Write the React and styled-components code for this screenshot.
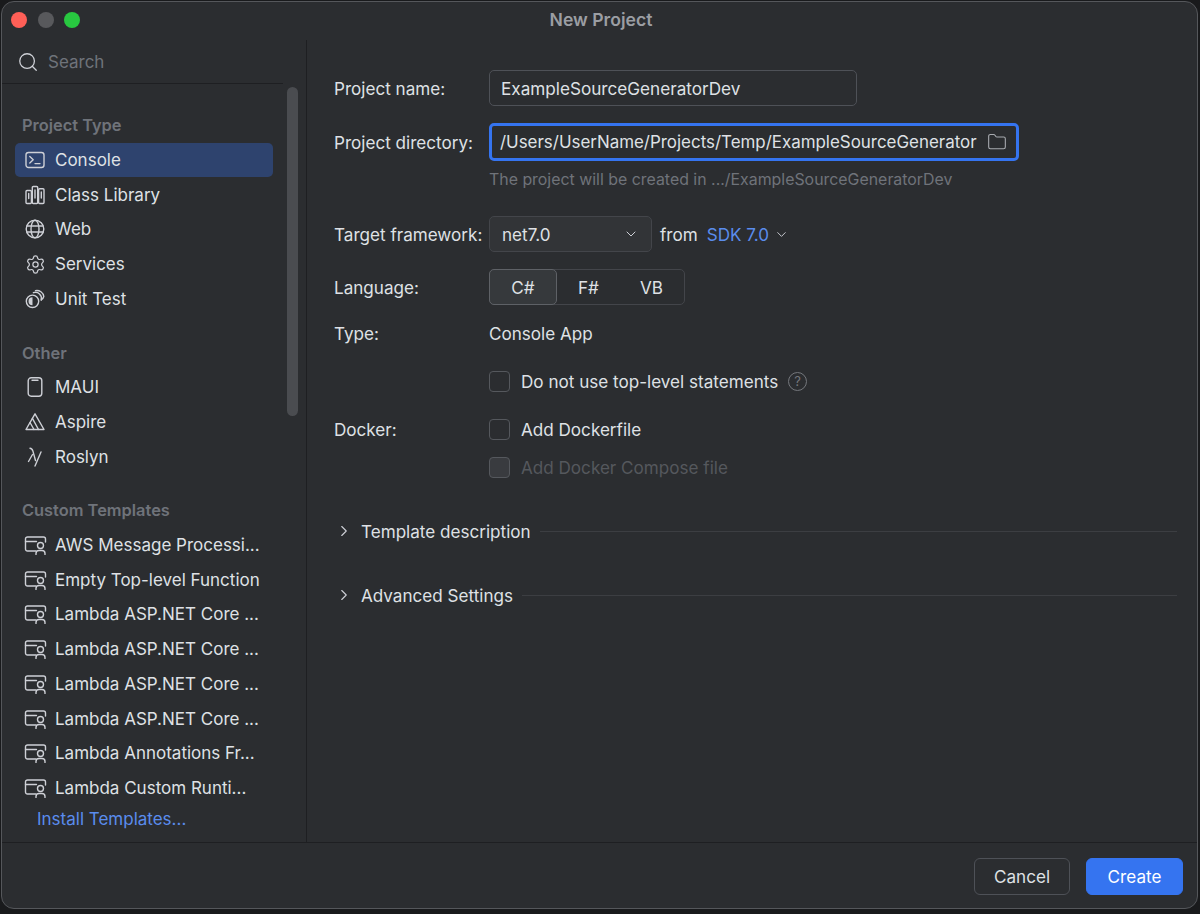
import React from 'react';
import styled, { createGlobalStyle } from 'styled-components';
import { Search, Settings, ChevronDown, ChevronRight, Folder } from 'lucide-react';

const GlobalStyle = createGlobalStyle`
  html, body { margin: 0; padding: 0; background: #191a1c; }
  * { box-sizing: border-box; }
  body { font-family: Inter, "Liberation Sans", sans-serif; }
`;

const Page = styled.div` width: 1200px; height: 914px; padding: 1px 2px 5px 1px; background: #191a1c; `;
const Window = styled.div`
  height: 100%; display: flex; flex-direction: column; background: #2b2d30; color: #dfe1e5;
  border: 1px solid #55575b; border-radius: 13px; overflow: hidden; font-size: 17.1px;
`;
const TitleBar = styled.div`
  height: 38px; flex: none; padding-bottom: 2px; display: grid; grid-template-columns: 1fr auto 1fr; align-items: center;
`;
const Lights = styled.div` display: flex; gap: 10.5px; padding-left: 9px; `;
const Light = styled.span` width: 16px; height: 16px; border-radius: 50%; background: ${p => p.$color}; `;
const Title = styled.div` font-size: 17.6px; font-weight: 600; color: #9b9ea3; padding: 0 0 2px 3px; `;

const Body = styled.div` flex: 1; min-height: 0; display: flex; border-bottom: 1px solid #1e1f22; `;
const Sidebar = styled.aside` width: 305px; flex: none; position: relative; border-right: 1px solid #1e1f22; font-size: 17px; `;
const SearchRow = styled.div`
  height: 44px; margin-right: 23px; display: flex; align-items: center; gap: 9px; padding-left: 15px;
  border-bottom: 1px solid #1e1f22; color: #6f737a; svg { color: #ced0d6; }
`;
const Scrollbar = styled.div`
  position: absolute; left: 285px; top: 47px; width: 11px; height: 329px; border-radius: 6px; background: #4a4c50;
`;
const List = styled.div` padding: 24px 0 0 13px; width: 258px; box-sizing: content-box; `;
const SectionTitle = styled.div`
  height: 34.5px; display: flex; align-items: center; padding-left: 7px; margin-top: ${p => p.$gap || 0}px;
  font-size: 16.4px; font-weight: 600; color: #6f737a;
`;
const Item = styled.div`
  width: 258px; height: 34.75px; display: flex; align-items: center; border-radius: 5px; color: #dfe1e5;
  background: ${p => (p.$active ? '#2e436e' : 'transparent')};
`;
const ItemIcon = styled.span` width: 40px; flex: none; display: flex; justify-content: center; color: #ced0d6; `;
const ItemLabel = styled.span` white-space: nowrap; `;
const InstallLink = styled.div` height: 26.5px; display: flex; align-items: center; padding-left: 22px; color: #5a8ced; `;

const Main = styled.main` flex: 1; min-width: 0; padding: 30px 23px 0 27px; `;
const Row = styled.div`
  display: flex; align-items: center; height: ${p => p.$h || 24}px; margin-top: ${p => p.$top || 0}px;
`;
const Label = styled.div` width: 155px; flex: none; white-space: nowrap; `;
const TextInput = styled.div`
  width: ${p => p.$w}px; height: ${p => (p.$focus ? 38 : 36)}px; display: flex; align-items: center;
  justify-content: space-between; padding: 0 ${p => (p.$focus ? 9 : 10)}px 0 ${p => (p.$focus ? 8 : 11)}px; border-radius: 5px; white-space: nowrap;
  font-size: ${p => (p.$focus ? 16.93 : 17.15)}px;
  border: ${p => (p.$focus ? '3px solid #3574f0' : '1px solid #4e5157')};
  svg { color: #a8abb0; flex: none; }
`;
const Hint = styled.div` padding-left: 155px; font-size: 15.9px; color: #6f737a; white-space: nowrap; `;
const Select = styled.div`
  width: 163px; height: 36px; display: flex; align-items: center; justify-content: space-between;
  padding: 0 12px 0 12px; background: #323437; border: 1px solid #43454a; border-radius: 5px;
  svg { color: #ced0d6; }
`;
const From = styled.span` margin: 0 9px 0 8px; `;
const SdkLink = styled.span`
  display: flex; align-items: center; gap: 5px; color: #5a8ced; svg { color: #ced0d6; }
`;
const Segments = styled.div` width: 196px; height: 36px; display: flex; border: 1px solid #43454a; border-radius: 5px; `;
const Segment = styled.div`
  width: ${p => p.$w}px; margin: -1px 0 -1px ${p => (p.$active ? -1 : 0)}px; display: flex; align-items: center; justify-content: center;
  border-radius: 5px; background: ${p => (p.$active ? '#36393c' : 'transparent')};
  border: 1px solid ${p => (p.$active ? '#5e6166' : 'transparent')};
`;
const CheckBox = styled.span`
  width: 21px; height: 21px; flex: none; margin-right: 11px; border-radius: 4px; border: 1px solid #55585d;
  background: ${p => (p.$disabled ? '#393b3f' : 'transparent')};
`;
const CheckText = styled.span` white-space: nowrap; color: ${p => (p.$disabled ? '#55585d' : 'inherit')}; `;
const Help = styled.span`
  width: 19px; height: 19px; margin-left: 10px; border-radius: 50%; border: 1px solid #74777c; color: #74777c;
  font-size: 13px; display: flex; align-items: center; justify-content: center;
`;
const Collapsible = styled.div`
  display: flex; align-items: center; height: 24px; margin-top: ${p => p.$top}px; white-space: nowrap;
  svg { color: #ced0d6; margin-right: 8px; margin-left: 1px; flex: none; }
`;
const Rule = styled.span` flex: 1; height: 1px; margin: 0 -3px 0 9px; background: #3c3e42; `;

const Footer = styled.footer` height: 65px; flex: none; display: flex; justify-content: flex-end; align-items: center; gap: 16px; padding: 1px 14px 0 0; `;
const Button = styled.button`
  width: ${p => (p.$primary ? 97 : 96)}px; height: 37px; border-radius: 6px; font: inherit; color: ${p => (p.$primary ? '#ffffff' : '#dfe1e5')};
  background: ${p => (p.$primary ? '#3574f0' : 'transparent')};
  border: 1px solid ${p => (p.$primary ? '#3574f0' : '#4e5157')};
`;

const Icon = ({ w = 20, h = 20, box = '0 0 20 20', children }) => (
  <svg width={w} height={h} viewBox={box} fill="none" stroke="currentColor" strokeWidth="1.4" strokeLinecap="round" strokeLinejoin="round">
    {children}
  </svg>
);
const ConsoleIcon = () => (
  <Icon><rect x="1" y="2.5" width="18" height="15" rx="2.5" /><path d="M4.8 6.6l3.4 3.2-3.4 3.2M10 13.6h5" /></Icon>
);
const LibraryIcon = () => (
  <Icon>
    <rect x="1" y="5.5" width="5.4" height="13" rx="1" /><rect x="7.3" y="1.5" width="5.4" height="17" rx="1" /><rect x="13.6" y="3.8" width="5.4" height="14.7" rx="1" />
    <path d="M3.7 8.5v5M10 5v8M16.3 7v6" />
  </Icon>
);
const GlobeIcon = () => (
  <Icon>
    <circle cx="10" cy="10" r="8.8" /><ellipse cx="10" cy="10" rx="4" ry="8.8" />
    <path d="M2 7h16M2 13h16" />
  </Icon>
);
const UnitTestIcon = () => (
  <Icon>
    <circle cx="7.5" cy="12.3" r="6.2" /><path d="M7.5 8.3a4 4 0 0 0 0 8z" fill="currentColor" stroke="none" />
    <path d="M8.4 3.7A6 6 0 0 1 16.2 11" /><path d="M10.5 1.6A7 7 0 0 1 18.8 7.5a6 6 0 0 1-2.6 3.5" />
  </Icon>
);
const PhoneIcon = () => (
  <Icon box="0 0 16 20" w={16}><rect x="1.2" y="0.8" width="13.6" height="18.4" rx="3" /><path d="M5 3.2h6" /></Icon>
);
const AspireIcon = () => (
  <Icon>
    <path d="M10 1.8L1 17.5h18z" /><path d="M7.4 6.4L13.5 17.5M5 10.5L9 17.5" />
  </Icon>
);
const RoslynIcon = () => (
  <Icon box="0 0 16 20" w={16}>
    <path d="M3 1.2c2 0 2.5 1.4 3 3.2L8.5 13.5M5.5 7.5L1.5 14.5M14 5L8 19" />
  </Icon>
);
const TemplateIcon = () => (
  <Icon w={23} h={20} box="0 0 23 20">
    <path d="M12 16H3.5A2 2 0 0 1 1.5 14V4a2 2 0 0 1 2-2h16a2 2 0 0 1 2 2v3" />
    <path d="M1.5 6.5h11" />
    <circle cx="16.5" cy="10.5" r="3" />
    <path d="M12 19.5v-1a3 3 0 0 1 3-3h3a3 3 0 0 1 3 3v1" />
  </Icon>
);

const projectTypes = [
  { name: 'Console', icon: <ConsoleIcon />, active: true },
  { name: 'Class Library', icon: <LibraryIcon /> },
  { name: 'Web', icon: <GlobeIcon /> },
  { name: 'Services', icon: <Settings size={21} strokeWidth={1.4} /> },
  { name: 'Unit Test', icon: <UnitTestIcon /> },
];
const otherTypes = [
  { name: 'MAUI', icon: <PhoneIcon /> },
  { name: 'Aspire', icon: <AspireIcon /> },
  { name: 'Roslyn', icon: <RoslynIcon /> },
];
const customTemplates = [
  'AWS Message Processi...',
  'Empty Top-level Function',
  'Lambda ASP.NET Core ...',
  'Lambda ASP.NET Core ...',
  'Lambda ASP.NET Core ...',
  'Lambda ASP.NET Core ...',
  'Lambda Annotations Fr...',
  'Lambda Custom Runti...',
];

const renderItem = (item) => (
  <Item key={item.name} $active={item.active}>
    <ItemIcon>{item.icon}</ItemIcon>
    <ItemLabel>{item.name}</ItemLabel>
  </Item>
);

export default function App() {
  return (
    <Page>
      <GlobalStyle />
      <Window>
        <TitleBar>
          <Lights>
            <Light $color="#ff5f57" />
            <Light $color="#58595c" />
            <Light $color="#28c840" />
          </Lights>
          <Title>New Project</Title>
        </TitleBar>
        <Body>
          <Sidebar>
            <SearchRow>
              <Search size={22} strokeWidth={1.4} />
              Search
            </SearchRow>
            <Scrollbar />
            <List>
              <SectionTitle>Project Type</SectionTitle>
              {projectTypes.map(renderItem)}
              <SectionTitle $gap={19}>Other</SectionTitle>
              {otherTypes.map(renderItem)}
              <SectionTitle $gap={19}>Custom Templates</SectionTitle>
              {customTemplates.map((name, i) => (
                <Item key={i}>
                  <ItemIcon><TemplateIcon /></ItemIcon>
                  <ItemLabel>{name}</ItemLabel>
                </Item>
              ))}
              <InstallLink>Install Templates...</InstallLink>
            </List>
          </Sidebar>
          <Main>
            <Row $h={36}>
              <Label>Project name:</Label>
              <TextInput $w={368}>ExampleSourceGeneratorDev</TextInput>
            </Row>
            <Row $h={38} $top={17}>
              <Label>Project directory:</Label>
              <TextInput $w={530} $focus>
                /Users/UserName/Projects/Temp/ExampleSourceGenerator
                <Folder size={20} strokeWidth={1.3} />
              </TextInput>
            </Row>
            <Row $h={20} $top={8}>
              <Hint>The project will be created in .../ExampleSourceGeneratorDev</Hint>
            </Row>
            <Row $h={36} $top={27}>
              <Label>Target framework:</Label>
              <Select>net7.0<ChevronDown size={16} strokeWidth={1.5} /></Select>
              <From>from</From>
              <SdkLink>SDK 7.0<ChevronDown size={15} strokeWidth={1.5} /></SdkLink>
            </Row>
            <Row $h={36} $top={17}>
              <Label>Language:</Label>
              <Segments>
                <Segment $w={68} $active>C#</Segment>
                <Segment $w={63}>F#</Segment>
                <Segment $w={63}>VB</Segment>
              </Segments>
            </Row>
            <Row $top={16}>
              <Label>Type:</Label>
              Console App
            </Row>
            <Row $top={24}>
              <Label />
              <CheckBox />
              <CheckText>Do not use top-level statements</CheckText>
              <Help>?</Help>
            </Row>
            <Row $top={24}>
              <Label>Docker:</Label>
              <CheckBox />
              <CheckText>Add Dockerfile</CheckText>
            </Row>
            <Row $top={14}>
              <Label />
              <CheckBox $disabled />
              <CheckText $disabled>Add Docker Compose file</CheckText>
            </Row>
            <Collapsible $top={40}>
              <ChevronRight size={18} strokeWidth={1.5} />
              Template description
              <Rule />
            </Collapsible>
            <Collapsible $top={40}>
              <ChevronRight size={18} strokeWidth={1.5} />
              Advanced Settings
              <Rule />
            </Collapsible>
          </Main>
        </Body>
        <Footer>
          <Button>Cancel</Button>
          <Button $primary>Create</Button>
        </Footer>
      </Window>
    </Page>
  );
}
